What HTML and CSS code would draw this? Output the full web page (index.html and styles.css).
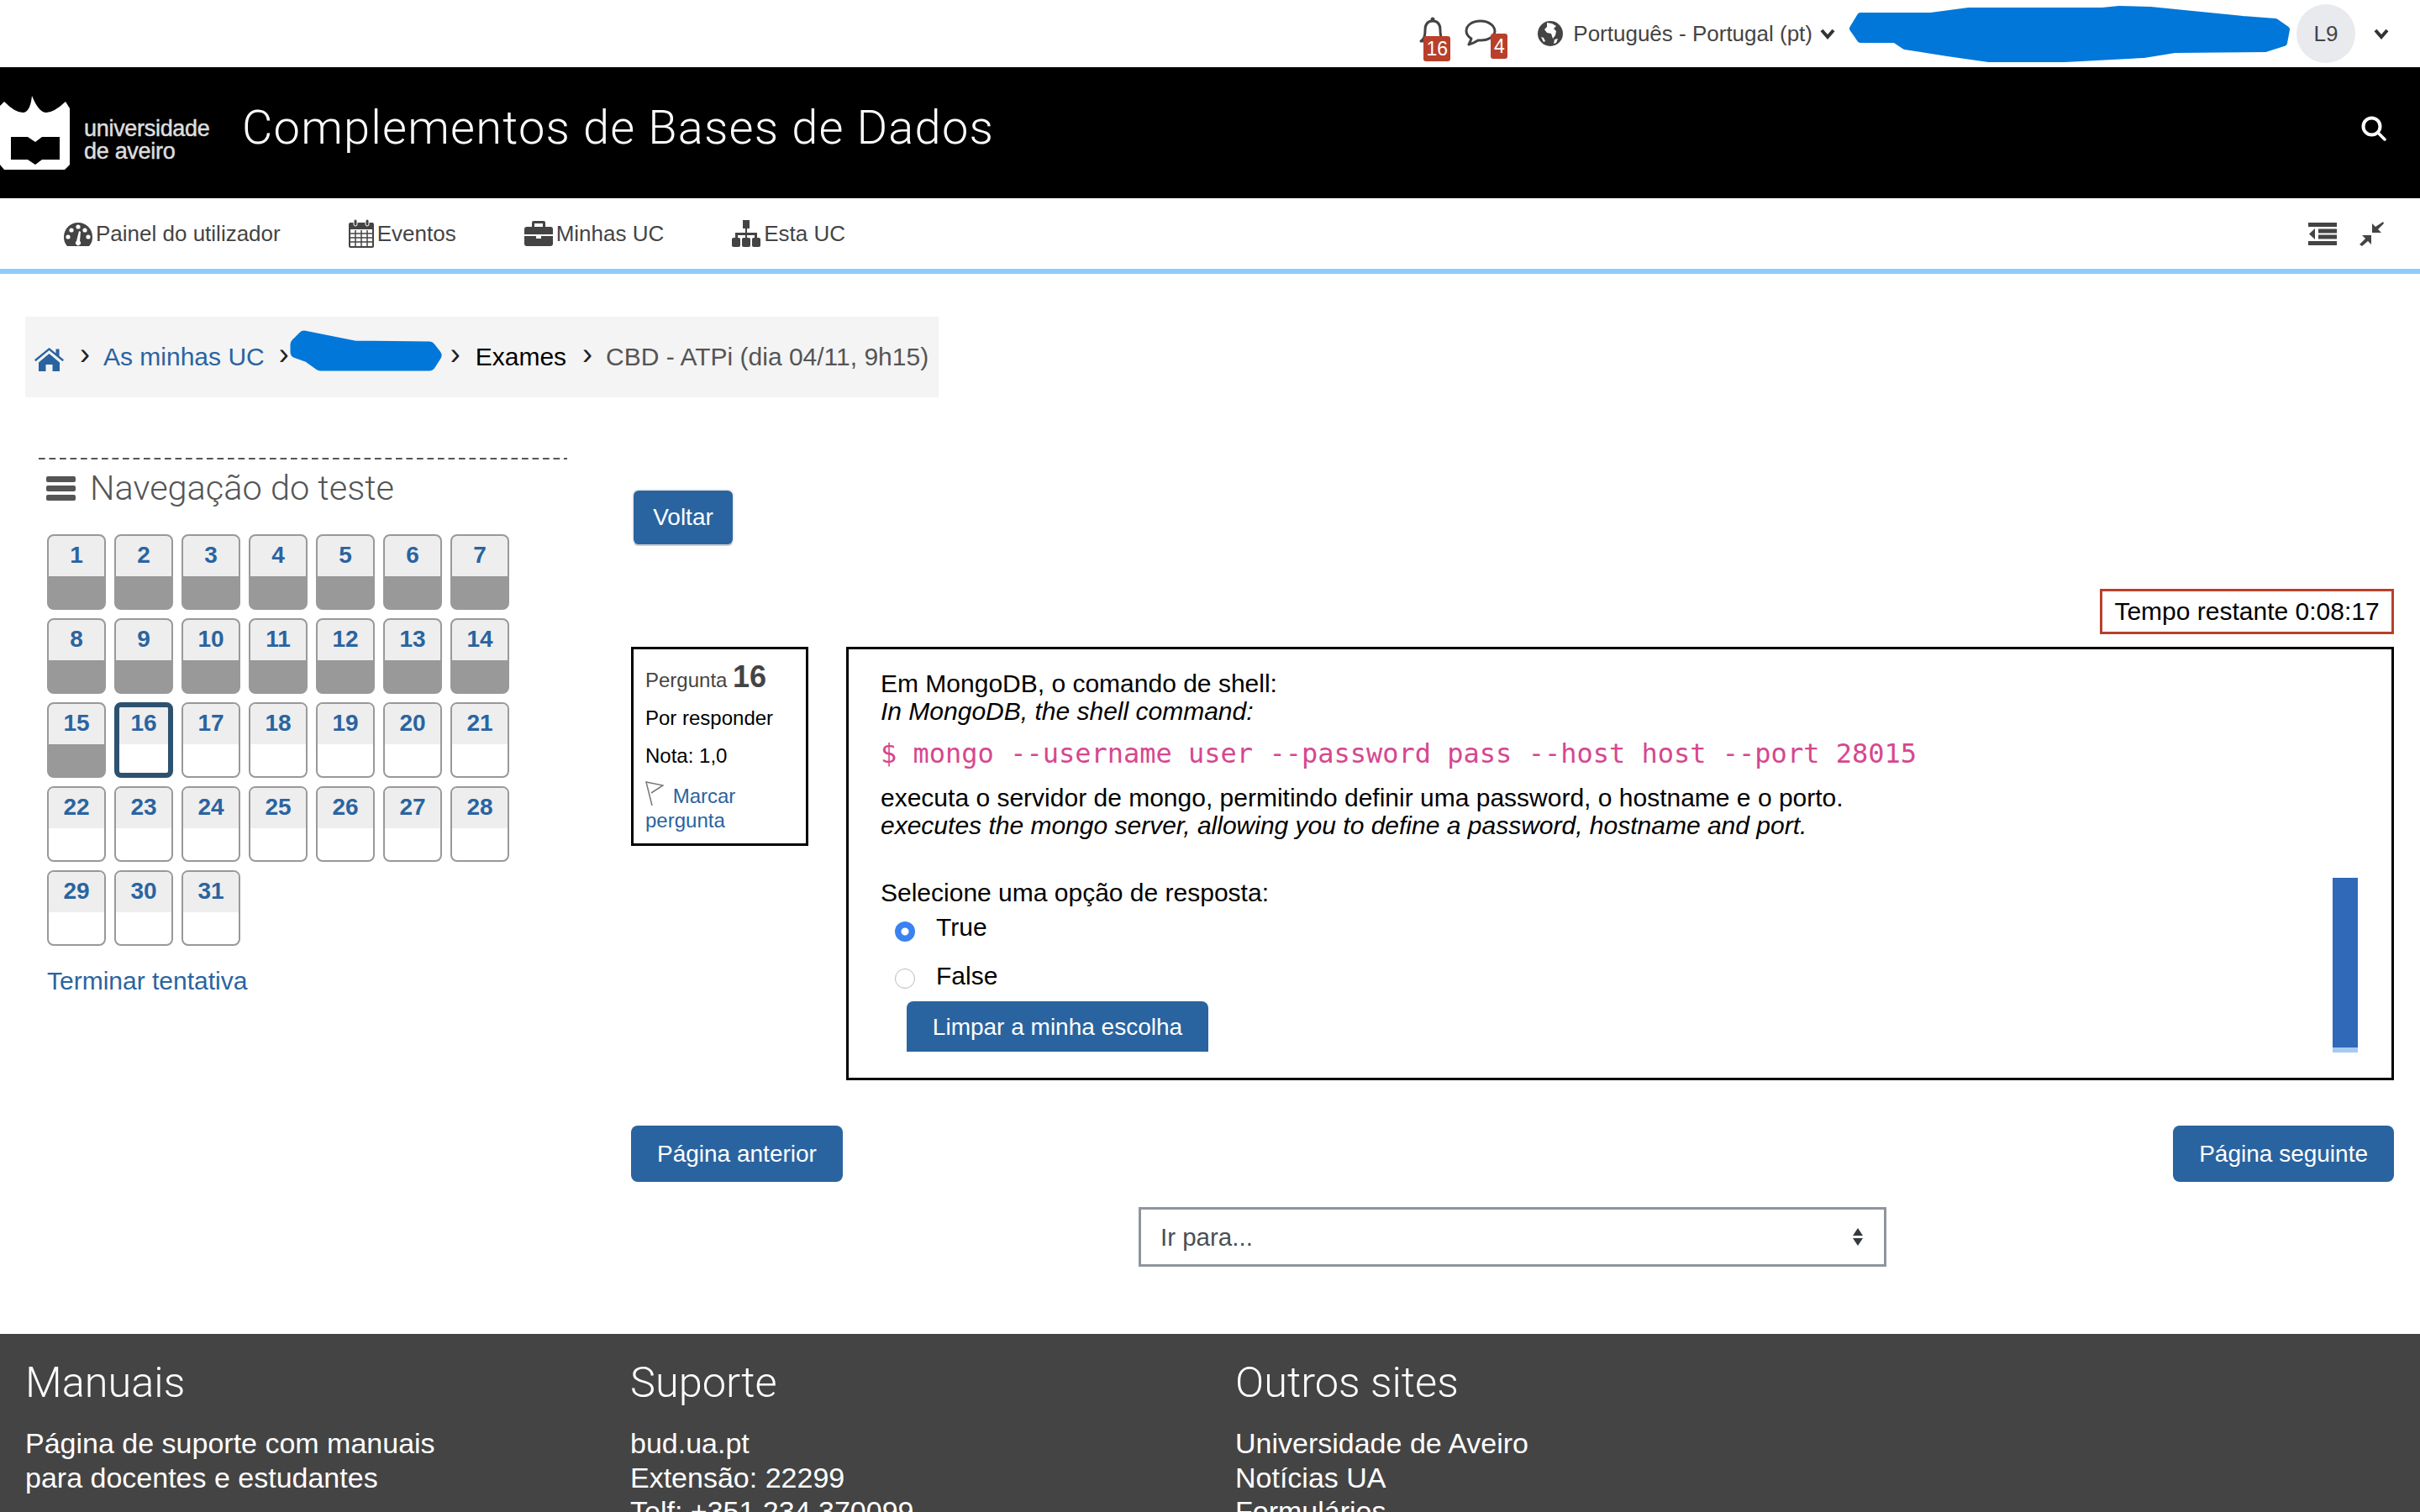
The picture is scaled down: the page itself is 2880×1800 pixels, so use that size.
FILE: index.html
```html
<!DOCTYPE html>
<html>
<head>
	<title>Complementos de Bases de Dados</title>
	<meta charset="utf-8">
	<link rel="stylesheet" href="styles.css">
</head>
<body>

	<div class="top-bar">
		<span class="pop-icon bell-wrap">
			<svg class="bell" viewBox="0 0 34 32"><path d="M3 29c4-3 5-6 5-13 0-7 3-11 9-11s9 4 9 11c0 7 1 10 5 13z" fill="none" stroke="#444" stroke-width="3" stroke-linejoin="round"/><circle cx="17" cy="3" r="2.5" fill="#444"/></svg>
			<span class="badge badge-bell">16</span>
		</span>
		<span class="pop-icon chat-wrap">
			<svg class="chat" viewBox="0 0 38 32"><path d="M19 2C9 2 2 7 2 14c0 4 3 7 6 9-1 3-2 5-3 7 4-1 8-3 11-5h3c10 0 17-5 17-11S29 2 19 2z" fill="none" stroke="#444" stroke-width="3" stroke-linejoin="round"/></svg>
			<span class="badge badge-chat">4</span>
		</span>
		<svg class="globe" viewBox="0 0 30 30"><circle cx="15" cy="15" r="15" fill="#444"/><path d="M11 2l6 1 5 3-3 3 3 3-1 5-3 4-2-6-5-1-3-4 3-3zM4 19l3 1 2 4-2 1zM20 22l4-1-2 5-3 1z" fill="#fff"/></svg>
		<span class="lang">Português - Portugal (pt)</span>
		<svg class="chevron" viewBox="0 0 20 14"><path d="M3 3l7 8 7-8" fill="none" stroke="#333" stroke-width="4"/></svg>
		<svg class="blob-top" viewBox="0 0 526 68"><path d="M14 13L98 13 143 7 302 7 322 5 359 6 469 17 508 20 521 29 518 45 496 52 388 53 351 59 257 64 167 64 118 57 67 49 55 41 14 41 5 28z" fill="#0077d9" stroke="#0077d9" stroke-width="8" stroke-linejoin="round"/></svg>
		<span class="avatar">L9</span>
		<svg class="chevron chevron-user" viewBox="0 0 20 14"><path d="M3 3l7 8 7-8" fill="none" stroke="#333" stroke-width="4"/></svg>
	</div>

	<div class="header">
		<svg class="logo" viewBox="0 0 83 88"><path fill-rule="evenodd" d="M5 7Q18 20 27 20T38 0Q46 20 55 20T78 7L83 15V82L77 88H5L0 82V12zM13 49V76H33L42 82 50 76H71V49H50L42 55 33 49z" fill="#fff"/></svg>
		<div class="logo-text">universidade<br>de aveiro</div>
		<div class="course-title">Complementos de Bases de Dados</div>
		<svg class="search" viewBox="0 0 30 30"><circle cx="12.500" cy="12.500" r="10" fill="none" stroke="#fff" stroke-width="4"/><path d="M20 20l8 8" stroke="#fff" stroke-width="3.500" stroke-linecap="round"/></svg>
	</div>

	<div class="nav-bar">
		<a class="nav-item">
			<svg class="nav-icon" viewBox="0 0 34 32"><path fill-rule="evenodd" d="M17 3C8 3 0 10 0 20c0 4 1 8 4 11h26c3-3 4-7 4-11C34 10 26 3 17 3z" fill="#444"/><g fill="#fff"><circle cx="17" cy="8" r="2.6"/><circle cx="9" cy="12" r="2.6"/><circle cx="25" cy="12" r="2.6"/><circle cx="5" cy="20" r="2.6"/><circle cx="29" cy="20" r="2.6"/><path d="M15 25l3-12 2 1-1 11a3 3 0 1 1-4 0z"/></g></svg>
			Painel do utilizador
		</a>
		<a class="nav-item">
			<svg class="nav-icon nav-icon-cal" viewBox="0 0 30 34"><path fill-rule="evenodd" d="M2 4h26a2 2 0 0 1 2 2v26a2 2 0 0 1-2 2H2a2 2 0 0 1-2-2V6a2 2 0 0 1 2-2zM2 12v20h26V12z" fill="#444"/><path d="M8 13v20M15 13v20M22 13v20M2 17h26M2 22h26M2 27h26" stroke="#444" stroke-width="1.5"/><rect x="6" y="0" width="4" height="8" rx="2" fill="#444" stroke="#fff"/><rect x="20" y="0" width="4" height="8" rx="2" fill="#444" stroke="#fff"/></svg>
			Eventos
		</a>
		<a class="nav-item">
			<svg class="nav-icon" viewBox="0 0 34 30"><path fill-rule="evenodd" d="M11 0h12a2 2 0 0 1 2 2v5h6a3 3 0 0 1 3 3v6H0v-6a3 3 0 0 1 3-3h6V2a2 2 0 0 1 2-2zm1 3v4h10V3z" fill="#444"/><path d="M0 18h14v3h6v-3h14v9a3 3 0 0 1-3 3H3a3 3 0 0 1-3-3z" fill="#444"/></svg>
			Minhas UC
		</a>
		<a class="nav-item">
			<svg class="nav-icon" viewBox="0 0 34 32"><path d="M13 0h8v10h-3v5h12v6h-3v-3H18v3h-2v-3H7v3H4v-6h12v-5h-3z" fill="#444"/><rect x="0" y="21" width="10" height="11" rx="2" fill="#444"/><rect x="12" y="21" width="10" height="11" rx="2" fill="#444"/><rect x="24" y="21" width="10" height="11" rx="2" fill="#444"/></svg>
			Esta UC
		</a>
		<div class="nav-tools">
			<svg class="tool-indent" viewBox="0 0 34 27"><path d="M0 0h34v5H0zM12 7.500h22v5H12zM12 14.500h22v5H12zM0 22h34v5H0zM8 7v13L1 13.500z" fill="#444"/></svg>
			<svg class="tool-compress" viewBox="0 0 29 29"><path d="M28 0l1 2-7 7 4 4H15V2l4 4zM0 27l7-7-4-4h11v11l-4-4-7 6z" fill="#444"/></svg>
		</div>
	</div>

	<div class="breadcrumb">
		<svg class="home" viewBox="0 0 35 28"><path d="M17.500 0l8 6.500V1.500h4v8.200l5.500 4.600-1.500 2L17.500 3 1.500 16.300 0 14.300zM5 17.500L17.500 7 30 17.500V28h-8.500v-8h-8v8H5z" fill="#2a64a0"/></svg>
		<span class="crumb-sep crumb-sep-first">›</span>
		<a class="crumb-link">As minhas UC</a>
		<span class="crumb-sep crumb-sep-tight">›</span>
		<svg class="blob-crumb" viewBox="0 0 181 50"><path d="M17 8L77 20 166 21 173 30 166 41 36 41 22 31 8 26 8 17z" fill="#0077d9" stroke="#0077d9" stroke-width="15" stroke-linejoin="round"/></svg>
		<span class="crumb-sep crumb-sep-next">›</span>
		<span class="crumb-current">Exames</span>
		<span class="crumb-sep">›</span>
		<span class="crumb-last">CBD - ATPi (dia 04/11, 9h15)</span>
	</div>

	<div class="page-body">
		<div class="side">
			<h2 class="side-title">
				<svg class="side-menu" viewBox="0 0 35 29"><rect width="35" height="7" rx="2" fill="#555"/><rect y="11" width="35" height="7" rx="2" fill="#555"/><rect y="22" width="35" height="7" rx="2" fill="#555"/></svg>
				Navegação do teste
			</h2>
			<div class="qn-grid">
				<a class="qn done"><span class="qn-num">1</span></a>
				<a class="qn done"><span class="qn-num">2</span></a>
				<a class="qn done"><span class="qn-num">3</span></a>
				<a class="qn done"><span class="qn-num">4</span></a>
				<a class="qn done"><span class="qn-num">5</span></a>
				<a class="qn done"><span class="qn-num">6</span></a>
				<a class="qn done"><span class="qn-num">7</span></a>
				<a class="qn done"><span class="qn-num">8</span></a>
				<a class="qn done"><span class="qn-num">9</span></a>
				<a class="qn done"><span class="qn-num">10</span></a>
				<a class="qn done"><span class="qn-num">11</span></a>
				<a class="qn done"><span class="qn-num">12</span></a>
				<a class="qn done"><span class="qn-num">13</span></a>
				<a class="qn done"><span class="qn-num">14</span></a>
				<a class="qn done"><span class="qn-num">15</span></a>
				<a class="qn current"><span class="qn-num">16</span></a>
				<a class="qn"><span class="qn-num">17</span></a>
				<a class="qn"><span class="qn-num">18</span></a>
				<a class="qn"><span class="qn-num">19</span></a>
				<a class="qn"><span class="qn-num">20</span></a>
				<a class="qn"><span class="qn-num">21</span></a>
				<a class="qn"><span class="qn-num">22</span></a>
				<a class="qn"><span class="qn-num">23</span></a>
				<a class="qn"><span class="qn-num">24</span></a>
				<a class="qn"><span class="qn-num">25</span></a>
				<a class="qn"><span class="qn-num">26</span></a>
				<a class="qn"><span class="qn-num">27</span></a>
				<a class="qn"><span class="qn-num">28</span></a>
				<a class="qn"><span class="qn-num">29</span></a>
				<a class="qn"><span class="qn-num">30</span></a>
				<a class="qn"><span class="qn-num">31</span></a>
			</div>
			<a class="finish">Terminar tentativa</a>
		</div>

		<div class="main">
			<a class="btn btn-back">Voltar</a>
			<div class="timer-row"><div class="timer">Tempo restante 0:08:17</div></div>
			<div class="question-row">
				<div class="q-info">
					<div class="q-no">Pergunta <b>16</b></div>
					<div class="q-state">Por responder</div>
					<div class="q-state">Nota: 1,0</div>
					<div class="q-flag">
						<svg class="flag" viewBox="0 0 22 30"><path d="M8 29L1 1l20 4-14 9" fill="none" stroke="#777" stroke-width="1.5"/></svg>
						<a>Marcar pergunta</a>
					</div>
				</div>
				<div class="q-box">
					<div class="q-scroll">
						<p class="q-text">Em MongoDB, o comando de shell:<br><i>In MongoDB, the shell command:</i></p>
						<pre class="q-code">$ mongo --username user --password pass --host host --port 28015</pre>
						<p class="q-text">executa o servidor de mongo, permitindo definir uma password, o hostname e o porto.<br><i>executes the mongo server, allowing you to define a password, hostname and port.</i></p>
						<p class="q-prompt">Selecione uma opção de resposta:</p>
						<label class="option option-true"><input type="radio" name="answer" checked> True</label>
						<label class="option option-false"><input type="radio" name="answer"> False</label>
						<a class="btn btn-clear">Limpar a minha escolha</a>
					</div>
					<div class="scroll-thumb"></div>
				</div>
			</div>
			<div class="page-nav">
				<a class="btn btn-page">Página anterior</a>
				<a class="btn btn-page">Página seguinte</a>
			</div>
			<div class="jump">
				<span>Ir para...</span>
				<svg class="jump-arrows" viewBox="0 0 14 21"><path d="M7 0l6 9H1zM1 12h12l-6 9z" fill="#343a40"/></svg>
			</div>
		</div>
	</div>

	<div class="footer">
		<div class="footer-col">
			<h3>Manuais</h3>
			<p>Página de suporte com manuais<br>para docentes e estudantes</p>
		</div>
		<div class="footer-col">
			<h3>Suporte</h3>
			<p>bud.ua.pt<br>Extensão: 22299<br>Telf: +351 234 370099</p>
		</div>
		<div class="footer-col">
			<h3>Outros sites</h3>
			<p>Universidade de Aveiro<br>Notícias UA<br>Formulários</p>
		</div>
	</div>

</body>
</html>
```

FILE: styles.css
```css
html, body {
	margin: 0;
	height: 1800px;
	overflow: hidden;
	background: #fff;
	color: #000;
	font-family: "Liberation Sans", Arial, sans-serif;
	font-size: 29px;
}

a { color: #2a64a0; text-decoration: none; }

/* top strip */
.top-bar {
	height: 80px;
	display: flex;
	align-items: center;
	justify-content: flex-end;
	padding-right: 36px;
	color: #444;
}

.pop-icon { position: relative; display: block; }
.bell-wrap { width: 34px; height: 32px; margin-right: 21px; margin-top: -8px; }
.chat-wrap { width: 38px; height: 32px; margin-right: 49px; margin-top: -2px; }
.bell { width: 34px; height: 32px; display: block; }
.chat { width: 38px; height: 32px; display: block; }

.badge {
	position: absolute;
	background: #b8402b;
	color: #fff;
	font-size: 23px;
	line-height: 30px;
	height: 30px;
	border-radius: 3px;
	text-align: center;
}
.badge-bell { left: 6px; width: 32px; top: 23px; }
.badge-chat { left: 31px; width: 20px; top: 17px; }

.globe { width: 30px; height: 30px; margin-right: 12px; }
.lang { font-size: 26px; margin-right: 8px; }
.chevron { width: 20px; height: 14px; }
.blob-top { width: 526px; height: 68px; margin-left: 15px; margin-right: 7px; }
.avatar {
	width: 70px;
	height: 70px;
	border-radius: 50%;
	background: #e9eaee;
	font-size: 26px;
	display: flex;
	align-items: center;
	justify-content: center;
}
.chevron-user { margin-left: 21px; }

/* black course header */
.header {
	height: 156px;
	background: #000;
	color: #fff;
	display: flex;
	align-items: center;
	padding-right: 40px;
}
.logo { width: 83px; height: 88px; flex: none; }
.logo-text {
	margin: 18px 0 0 17px;
	width: 188px;
	font-size: 27px;
	line-height: 27px;
	letter-spacing: -0.3px;
	color: #ddd;
	-webkit-text-stroke: 0.5px #ddd;
}
.course-title {
	font-family: Roboto, "Liberation Sans", sans-serif;
	font-weight: 300;
	font-size: 56px;
	letter-spacing: 1.2px;
	padding-bottom: 12px;
}
.search { width: 30px; height: 30px; margin-left: auto; margin-bottom: 10px; }

/* course nav */
.nav-bar {
	height: 84px;
	border-bottom: 6px solid #90caf9;
	display: flex;
	align-items: center;
	padding: 0 43px 0 76px;
	gap: 81px;
}
.nav-item { display: flex; align-items: center; gap: 4px; color: #444; font-size: 26px; }
.nav-icon { width: 34px; height: 32px; }
.nav-icon-cal { width: 30px; height: 34px; }
.nav-tools { margin-left: auto; display: flex; align-items: center; gap: 27px; }
.tool-indent { width: 34px; height: 27px; }
.tool-compress { width: 29px; height: 29px; }

/* breadcrumb */
.breadcrumb {
	width: 1087px;
	height: 96px;
	margin: 51px 0 0 30px;
	padding-left: 11px;
	box-sizing: border-box;
	background: #f4f4f4;
	display: flex;
	align-items: center;
	font-size: 30px;
	color: #555;
}
.home { width: 35px; height: 28px; margin-top: 6px; }
.crumb-sep { color: #222; margin: -6px 18px 0 19px; font-size: 36px; }
.crumb-sep-first { margin-right: 16px; }
.crumb-sep-tight { margin-left: 17px; margin-right: 0; }
.crumb-sep-next { margin-left: 10px; }
.crumb-current { color: #000; }
.crumb-last { margin-left: -2px; }
.blob-crumb { width: 181px; height: 50px; margin: -14px 0 0 1px; }

/* two columns */
.page-body {
	display: grid;
	grid-template-columns: 629px 2098px;
	column-gap: 76px;
	padding-left: 46px;
	margin-top: 72px;
	height: 1043px;
	box-sizing: border-box;
}

/* quiz nav block */
.side {
	padding-top: 2px;
	background: linear-gradient(to right, #555 8px, transparent 8px) 0 0 / 12.500px 2px repeat-x;
}
.side-title {
	margin: 0;
	padding: 11px 0 0 9px;
	display: flex;
	align-items: center;
	gap: 17px;
	font-family: Roboto, "Liberation Sans", sans-serif;
	font-weight: 300;
	font-size: 41.500px;
	line-height: 46px;
	color: #555;
}
.side-menu { width: 35px; height: 29px; }
.qn-grid {
	display: grid;
	grid-template-columns: repeat(7, 70px);
	grid-auto-rows: 90px;
	gap: 10px;
	margin: 32px 0 0 10px;
}
.qn {
	border: 2px solid #999;
	border-radius: 8px;
	overflow: hidden;
	display: block;
	box-sizing: border-box;
}
.qn-num {
	display: block;
	height: 48px;
	background: #eee;
	text-align: center;
	font-weight: bold;
	font-size: 28px;
	line-height: 46px;
}
.done { background: #999; }
.current { border: 6px solid #2d5270; }
.current .qn-num { height: 44px; line-height: 38px; }
.finish { display: block; margin: 25px 0 0 10px; font-size: 30px; }

/* main column */
.main { padding-top: 37px; }

.btn {
	display: block;
	background: #2a64a0;
	color: #fff;
	text-align: center;
	border-radius: 8px;
	box-sizing: border-box;
}
.btn-back {
	width: 122px;
	height: 68px;
	margin-left: 1px;
	font-size: 28px;
	line-height: 63px;
	border: 2px solid #eee;
	border-bottom-color: #ccc;
}
.timer-row { display: flex; justify-content: flex-end; margin-top: 51px; }
.timer {
	width: 350px;
	height: 54px;
	box-sizing: border-box;
	border: 3px solid #b8402b;
	line-height: 48px;
	text-align: center;
	font-size: 30px;
}

.question-row { display: flex; gap: 45px; margin-top: 15px; align-items: flex-start; }
.q-info {
	width: 211px;
	height: 237px;
	box-sizing: border-box;
	border: 3px solid #000;
	padding: 13px 14px 0;
	font-size: 24px;
}
.q-no { color: #444; line-height: 40px; margin-bottom: 2px; }
.q-no b { font-size: 36px; }
.q-state { line-height: 45px; }
.q-flag { line-height: 29px; margin-top: 8px; }
.flag { width: 22px; height: 30px; margin-right: 4px; vertical-align: -4px; }

.q-box {
	position: relative;
	flex: 1;
	height: 516px;
	box-sizing: border-box;
	border: 3px solid #000;
	padding: 24px 37px 0 38px;
}
.q-scroll { height: 455px; overflow: hidden; }
.q-text { margin: 0; font-size: 30px; line-height: 33px; }
.q-code {
	margin: 12px 0 14px;
	font-family: "DejaVu Sans Mono", monospace;
	font-size: 32px;
	line-height: 44px;
	color: #d6478f;
}
.q-prompt { margin: 47px 0 0; font-size: 30px; line-height: 33px; }
.option { display: flex; align-items: flex-start; height: 58px; font-size: 30px; line-height: 33px; }
.option input {
	appearance: none;
	width: 24px;
	height: 24px;
	margin: 10px 25px 0 17px;
	border-radius: 50%;
	border: 1px solid #bbb;
	background: #fff;
}
.option input:checked {
	border: none;
	background: radial-gradient(circle, #fff 0 4px, #3b82f0 5px);
}
.option-true { margin-top: 8px; }
.option-false { height: 47px; }
.option-false input { margin-top: 8px; }
.btn-clear {
	width: 359px;
	height: 80px;
	margin-left: 31px;
	line-height: 62px;
	font-size: 28px;
}
.scroll-thumb {
	position: absolute;
	right: 40px;
	top: 272px;
	width: 30px;
	height: 202px;
	background: #3069b8;
	border-bottom: 6px solid #a6c9f0;
}

.page-nav { display: flex; justify-content: space-between; margin-top: 54px; }
.btn-page { height: 67px; padding: 0 31px; line-height: 67px; font-size: 28px; }

.jump {
	width: 890px;
	height: 71px;
	margin: 30px auto 0;
	padding: 0 24px 0 23px;
	box-sizing: border-box;
	border: 3px solid #8f959e;
	display: flex;
	align-items: center;
	justify-content: space-between;
	color: #495057;
	font-size: 29.500px;
}
.jump-arrows { width: 14px; height: 21px; }

/* footer */
.footer {
	background: #444;
	color: #fff;
	display: grid;
	grid-template-columns: repeat(3, 720px);
	padding: 28px 0 0 30px;
	box-sizing: border-box;
}
.footer h3 {
	margin: 0;
	font-family: Roboto, "Liberation Sans", sans-serif;
	font-weight: 300;
	font-size: 50.500px;
	line-height: 60px;
}
.footer p { margin: 22px 0 0; font-size: 34px; line-height: 40.500px; }
```
